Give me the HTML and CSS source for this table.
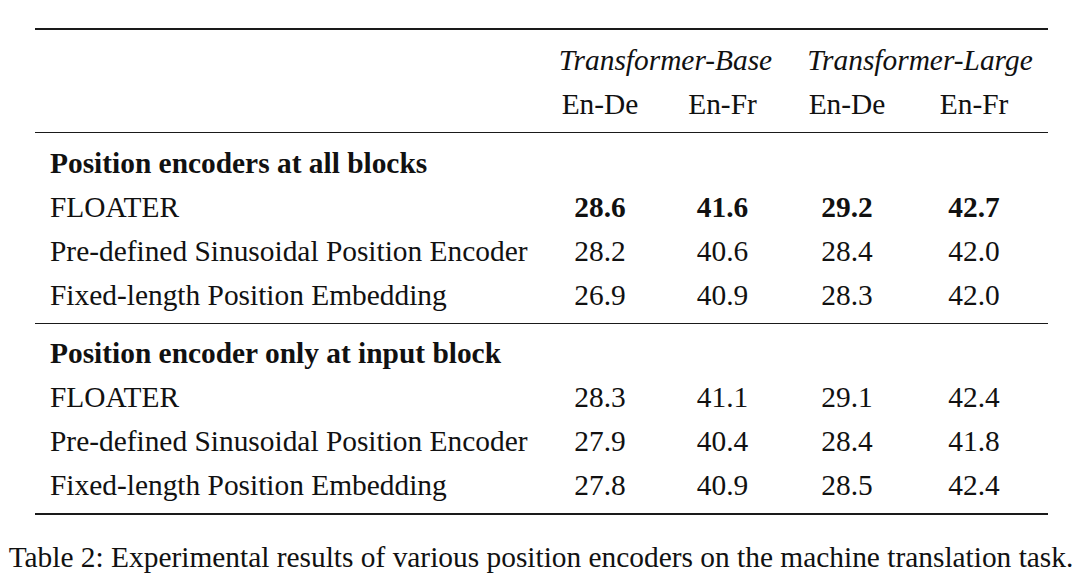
FILE: index.html
```html
<!DOCTYPE html>
<html>
<head>
<meta charset="utf-8">
<link rel="stylesheet" href="styles.css">
</head>
<body>
<div class="page">
  <table class="results">
    <colgroup>
      <col class="c-name">
      <col class="c-num">
      <col class="c-num2">
      <col class="c-num3">
      <col class="c-num4">
    </colgroup>
    <thead>
      <tr class="head1">
        <th></th>
        <th colspan="2" class="model">Transformer-Base</th>
        <th colspan="2" class="model">Transformer-Large</th>
      </tr>
      <tr class="head2">
        <th></th>
        <th>En-De</th>
        <th>En-Fr</th>
        <th>En-De</th>
        <th class="last">En-Fr</th>
      </tr>
    </thead>
    <tbody class="group">
      <tr class="section"><td colspan="5">Position encoders at all blocks</td></tr>
      <tr class="best"><td class="name">FLOATER</td><td>28.6</td><td>41.6</td><td>29.2</td><td class="last">42.7</td></tr>
      <tr><td class="name">Pre-defined Sinusoidal Position Encoder</td><td>28.2</td><td>40.6</td><td>28.4</td><td class="last">42.0</td></tr>
      <tr class="end"><td class="name">Fixed-length Position Embedding</td><td>26.9</td><td>40.9</td><td>28.3</td><td class="last">42.0</td></tr>
    </tbody>
    <tbody class="group">
      <tr class="section"><td colspan="5">Position encoder only at input block</td></tr>
      <tr><td class="name">FLOATER</td><td>28.3</td><td>41.1</td><td>29.1</td><td class="last">42.4</td></tr>
      <tr><td class="name">Pre-defined Sinusoidal Position Encoder</td><td>27.9</td><td>40.4</td><td>28.4</td><td class="last">41.8</td></tr>
      <tr class="end"><td class="name">Fixed-length Position Embedding</td><td>27.8</td><td>40.9</td><td>28.5</td><td class="last">42.4</td></tr>
    </tbody>
  </table>
  <p class="caption">Table 2: Experimental results of various position encoders on the machine translation task.</p>
</div>
</body>
</html>
```

FILE: styles.css
```css
html, body {
  margin: 0;
  padding: 0;
  background: #ffffff;
}

body {
  width: 1080px;
  height: 580px;
  overflow: hidden;
  font-family: "Liberation Serif", "Times New Roman", serif;
  font-size: 29.4px;
  color: #111111;
}

.page {
  padding-top: 28px;
}

.results {
  margin-left: 35px;
  width: 1013px;
  table-layout: fixed;
  border-collapse: collapse;
  border-top: 2px solid #1a1a1a;
  border-bottom: 2px solid #1a1a1a;
}

.c-name { width: 504px; }
.c-num { width: 122px; }
.c-num2 { width: 123px; }
.c-num3 { width: 126px; }
.c-num4 { width: 138px; }

.results th,
.results td {
  padding: 0;
  line-height: 44px;
  text-align: center;
  font-weight: normal;
  white-space: nowrap;
}

.results td.name,
.results .section td {
  text-align: left;
  padding-left: 15px;
}

.results .last {
  padding-right: 10px;
}

.results .model {
  font-style: italic;
  padding-left: 8px;
  padding-right: 0;
}

.head1 th {
  padding-top: 8px;
}

.head2 th {
  padding-bottom: 6px;
  border-bottom: 1.5px solid #1a1a1a;
}

.section td {
  padding-top: 7.5px;
}

.results .section td {
  font-weight: bold;
}

.best td {
  font-weight: bold;
}

.best td.name {
  font-weight: normal;
}

.end td {
  padding-bottom: 6px;
}

.group + .group .section td {
  border-top: 1.5px solid #1a1a1a;
}

.caption {
  margin: 20px 0 0 0;
  text-align: center;
  line-height: 44px;
  white-space: nowrap;
  padding-left: 2px;
}
```
